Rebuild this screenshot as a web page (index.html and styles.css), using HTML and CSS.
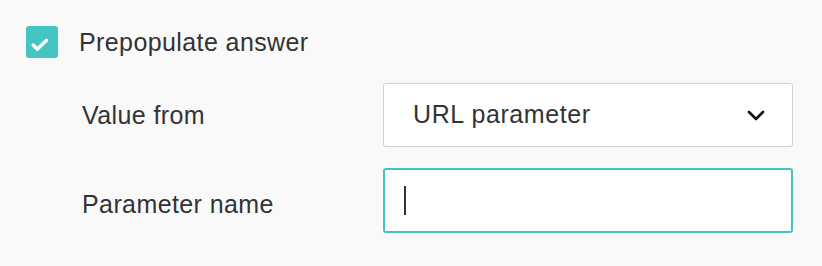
FILE: index.html
```html
<!DOCTYPE html>
<html lang="en">
<head>
<meta charset="utf-8">
<title>Prepopulate answer</title>
<link rel="stylesheet" href="styles.css">
</head>
<body>
<div class="panel">
  <label class="check-row">
    <span class="checkbox">
      <svg width="32" height="32" viewBox="0 0 32 32" aria-hidden="true">
        <path d="M7.2 19 L11.2 23.2 L20.6 14.2" fill="none" stroke="#fff" stroke-width="3.4" stroke-linecap="round" stroke-linejoin="round"/>
      </svg>
    </span>
    <span class="check-label">Prepopulate answer</span>
  </label>
  <div class="fields">
    <div class="field-label">Value from</div>
    <div class="select">
      <span class="select-value">URL parameter</span>
      <svg class="chevron" width="18" height="11" viewBox="0 0 18 11" aria-hidden="true">
        <path d="M2 2 L9 9 L16 2" fill="none" stroke="#111" stroke-width="2.6" stroke-linecap="round" stroke-linejoin="round"/>
      </svg>
    </div>
    <div class="field-label label-param">Parameter name</div>
    <div class="input"><span class="caret"></span></div>
  </div>
</div>
</body>
</html>
```
FILE: styles.css
```css
html, body {
  margin: 0;
  padding: 0;
  background: #f9f9f9;
}
body {
  font-family: "Liberation Sans", Arial, sans-serif;
  color: #333;
  width: 822px;
  height: 266px;
  overflow: hidden;
}
.panel {
  padding: 26px 0 0 26px;
}
.check-row {
  display: flex;
  align-items: center;
  gap: 21px;
  height: 32px;
}
.checkbox {
  width: 32px;
  height: 32px;
  border-radius: 3px;
  background: #44c5c3;
  display: block;
  flex: none;
}
.checkbox svg {
  display: block;
}
.check-label {
  font-size: 25px;
  letter-spacing: 0.4px;
  line-height: 32px;
}
.fields {
  display: grid;
  grid-template-columns: 301px 410px;
  grid-template-rows: 64px 65px;
  row-gap: 21px;
  margin-top: 25px;
  padding-left: 56px;
  align-items: center;
}
.field-label {
  font-size: 25px;
  letter-spacing: 0.4px;
  line-height: 30px;
}
.label-param {
  padding-top: 6px;
}
.select {
  box-sizing: border-box;
  height: 64px;
  background: #fff;
  border: 1px solid #cfcfcf;
  border-radius: 3px;
  display: flex;
  align-items: center;
  justify-content: space-between;
  padding: 0 27px 0 29px;
}
.select-value {
  font-size: 25px;
  letter-spacing: 0.6px;
  padding-bottom: 2px;
}
.chevron {
  display: block;
}
.input {
  box-sizing: border-box;
  height: 65px;
  background: #fff;
  border: 2px solid #44c5c3;
  border-radius: 3px;
  display: flex;
  align-items: center;
  padding-left: 19px;
}
.caret {
  display: block;
  width: 2px;
  height: 29px;
  background: #333;
}
```
